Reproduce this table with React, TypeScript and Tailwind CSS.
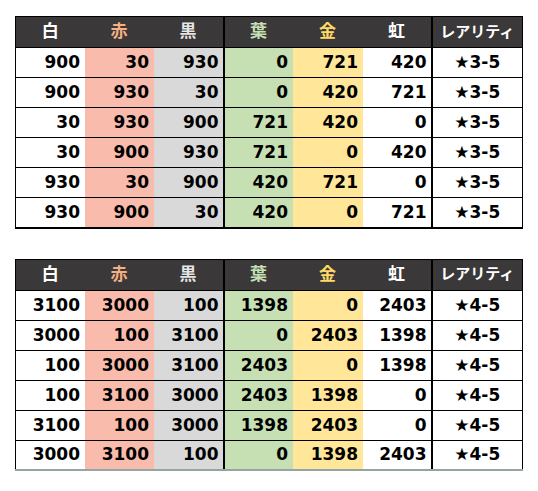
const headers = [
  { label: "白", color: "text-white" },
  { label: "赤", color: "text-[#f4b084]" },
  { label: "黒", color: "text-[#e7e6e6]" },
  { label: "葉", color: "text-[#c6e0b4]" },
  { label: "金", color: "text-[#ffd966]" },
  { label: "虹", color: "text-white" },
];

const cellBg = ["bg-white", "bg-[#f8bbac]", "bg-[#d9d9d9]", "bg-[#c6e0b4]", "bg-[#ffe699]", "bg-white"];

const table1 = [
  [900, 30, 930, 0, 721, 420],
  [900, 930, 30, 0, 420, 721],
  [30, 930, 900, 721, 420, 0],
  [30, 900, 930, 721, 0, 420],
  [930, 30, 900, 420, 721, 0],
  [930, 900, 30, 420, 0, 721],
];

const table2 = [
  [3100, 3000, 100, 1398, 0, 2403],
  [3000, 100, 3100, 0, 2403, 1398],
  [100, 3000, 3100, 2403, 0, 1398],
  [100, 3100, 3000, 2403, 1398, 0],
  [3100, 100, 3000, 1398, 2403, 0],
  [3000, 3100, 100, 0, 1398, 2403],
];

// 黒 and 虹 have a heavier right edge
const thick = (i: number) => (i === 2 || i === 5 ? "border-r-2" : "border-r");

function StatTable({ rows, rarity, bottom }: { rows: number[][]; rarity: string; bottom: string }) {
  return (
    <table className="table-fixed border-collapse w-[507px] font-bold text-[17px] text-black [font-family:'DejaVu_Sans','Noto_Sans_CJK_JP',sans-serif]">
      <colgroup>
        <col className="w-[69px]" />
        <col className="w-[69px]" />
        <col className="w-[70px]" />
        <col className="w-[69px]" />
        <col className="w-[70px]" />
        <col className="w-[69px]" />
        <col className="w-[91px]" />
      </colgroup>
      <thead>
        <tr className="h-[31px] bg-[#3a3838]">
          {headers.map((h, i) => (
            <th
              key={h.label}
              className={`border-y border-black ${i === 0 ? "border-l" : ""} ${i === 2 || i === 5 ? "border-r-2 border-r-black" : "border-r-0"} p-0 text-center font-bold ${h.color}`}
            >
              {h.label}
            </th>
          ))}
          <th className="border border-black p-0 text-center font-bold text-white text-[15px]">レアリティ</th>
        </tr>
      </thead>
      <tbody>
        {rows.map((r, ri) => {
          const last = ri === rows.length - 1;
          return (
            <tr key={ri} className="h-[30px]">
              {r.map((v, i) => (
                <td
                  key={i}
                  className={`${cellBg[i]} ${i === 0 ? "border-l border-l-black" : ""} ${thick(i)} ${i === 2 || i === 5 ? "border-r-black" : "border-r-transparent"} border-t border-t-black ${last ? bottom : "border-b border-b-black"} p-0 pr-[4px] text-right leading-none`}
                >
                  {v}
                </td>
              ))}
              <td className={`bg-white border-r border-r-black border-t border-t-black ${last ? bottom : "border-b border-b-black"} p-0 text-center leading-none`}>
                {rarity}
              </td>
            </tr>
          );
        })}
      </tbody>
    </table>
  );
}

export default function App() {
  return (
    <div className="w-[538px] h-[491px] bg-white pl-[15px] pt-[16px] flex flex-col gap-[30px]">
      <StatTable rows={table1} rarity="★3-5" bottom="border-b-2 border-b-black" />
      <StatTable rows={table2} rarity="★4-5" bottom="border-b-2 border-b-[#95a5a5]" />
    </div>
  );
}
